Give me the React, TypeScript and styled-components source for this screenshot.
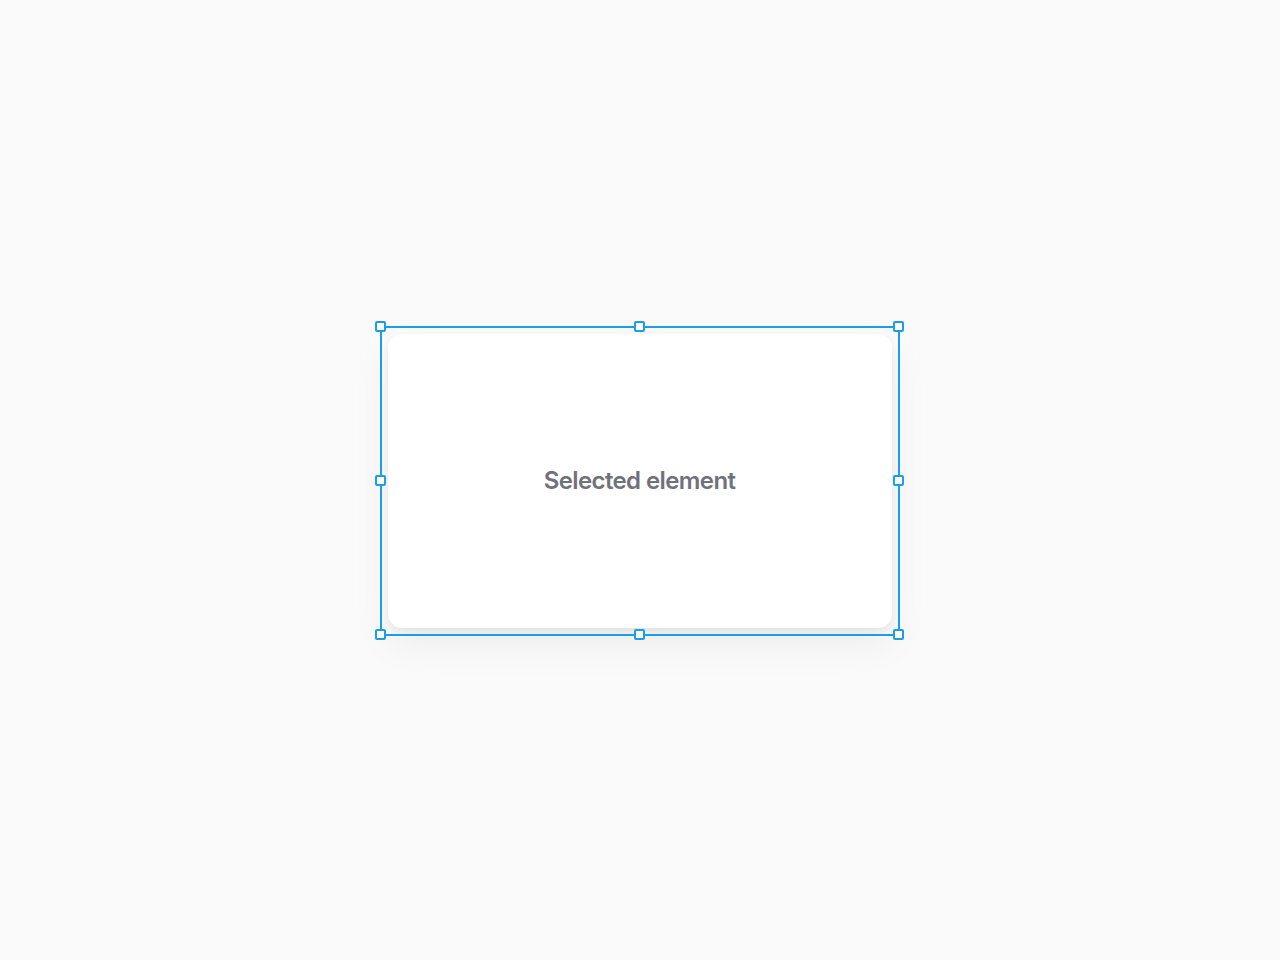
import React from "react";
import styled, { createGlobalStyle } from "styled-components";

const GlobalStyle = createGlobalStyle`
  html, body {
    margin: 0;
    padding: 0;
    background: #fafafa;
  }
  body {
    font-family: Inter, "Noto Sans", sans-serif;
  }
`;

const Canvas = styled.main`
  width: 1280px;
  height: 960px;
  display: flex;
  align-items: center;
  justify-content: center;
`;

const Selection = styled.div`
  position: relative;
  padding: 8px;
  margin: 1px 0 0 -1px;
`;

const Card = styled.div`
  width: 504px;
  height: 294px;
  background: #ffffff;
  border-radius: 14px;
  box-shadow: 0 3px 6px rgba(0, 0, 0, 0.05), 0 16px 40px rgba(0, 0, 0, 0.06);
  display: flex;
  align-items: center;
  justify-content: center;
`;

const Label = styled.span`
  font-family: Inter, "Noto Sans", sans-serif;
  font-size: 24px;
  font-weight: 600;
  letter-spacing: -0.025em;
  color: #71717a;
`;

const Frame = styled.div`
  position: absolute;
  inset: 0;
  border: 2px solid #1a9ee6;
  pointer-events: none;
`;

const Handle = styled.span<{ $x: string; $y: string }>`
  position: absolute;
  left: ${({ $x }) => $x};
  top: ${({ $y }) => $y};
  width: 11px;
  height: 11px;
  box-sizing: border-box;
  margin: -5.5px 0 0 -5.5px;
  background: #ffffff;
  border: 2px solid #1a9ee6;
  border-radius: 2px;
`;

// handle centers, measured from the frame's padding box
const handles: [string, string][] = [
  ["-1px", "-1px"],
  ["50%", "-1px"],
  ["calc(100% + 1px)", "-1px"],
  ["-1px", "50%"],
  ["calc(100% + 1px)", "50%"],
  ["-1px", "calc(100% + 1px)"],
  ["50%", "calc(100% + 1px)"],
  ["calc(100% + 1px)", "calc(100% + 1px)"],
];

export default function App() {
  return (
    <>
      <GlobalStyle />
      <Canvas>
        <Selection>
          <Card>
            <Label>Selected element</Label>
          </Card>
          <Frame>
            {handles.map(([x, y]) => (
              <Handle key={x + y} $x={x} $y={y} />
            ))}
          </Frame>
        </Selection>
      </Canvas>
    </>
  );
}
